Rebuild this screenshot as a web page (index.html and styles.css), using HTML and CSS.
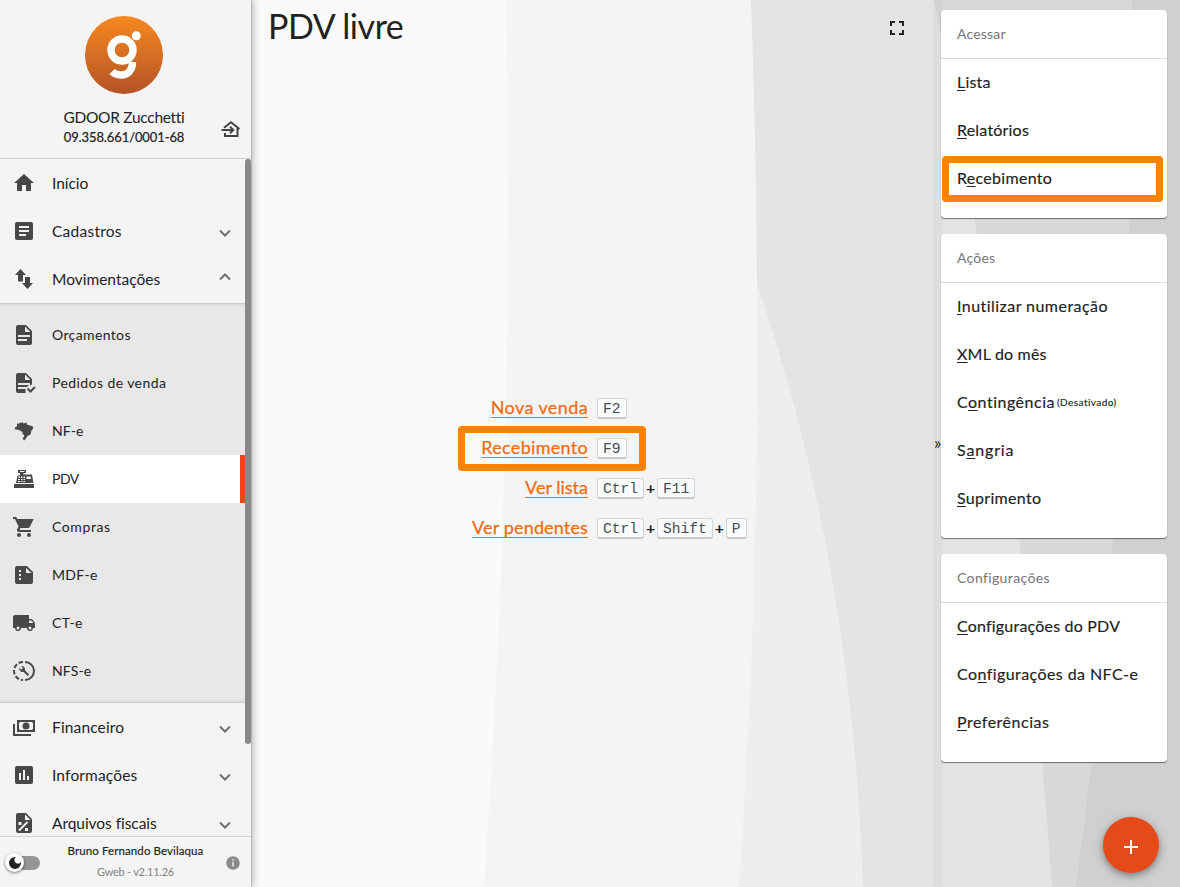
FILE: index.html
```html
<!DOCTYPE html>
<html lang="pt-BR">
<head>
<meta charset="utf-8">
<title>PDV livre</title>
<link rel="stylesheet" href="styles.css">
</head>
<body>
<svg class="backdrop" viewBox="0 0 1180 887" aria-hidden="true">
  <rect width="1180" height="887" fill="#fafafa"/>
  <path fill="#f4f4f4" d="M506 0Q510 210 506 396Q502 620 484 887H1180V0z"/>
  <path fill="#eee" d="M751 0Q756 130 757 284Q760 580 739 887H1180V0z"/>
  <path fill="#e4e4e4" d="M751 0Q756 130 757 284Q852 560 863 887H1180V0z"/>
  <path fill="#d8d8d8" d="M934 0Q1018 410 1052 887H1180V0z"/>
  <path fill="#d0d0d0" d="M1132 0Q1136 440 1076 887H1180V0z"/>
</svg>
<div class="app">
  <aside class="sidebar">
    <header class="company">
      <svg class="logo" viewBox="85 16 78 78"><defs><linearGradient id="lg" x2="0" y2="1"><stop stop-color="#f78820"/><stop offset="1" stop-color="#b45327"/></linearGradient></defs><circle cx="124" cy="55" r="39" fill="url(#lg)"/><g fill="none" stroke="#fff" stroke-width="7.4"><circle cx="122" cy="50" r="11"/><path d="M132.500 62C132.500 70 128 75 121 75C117.400 75 114.400 74 112 71.500"/></g><circle cx="136.300" cy="35.700" r="4.500" fill="#fff"/></svg>
      <div class="company-name">GDOOR Zucchetti</div>
      <div class="company-id">09.358.661/0001-68</div>
      <svg class="switch-company" viewBox="0 0 24 24" fill="none" stroke="#444" stroke-width="2"><path d="M5 10.800L12 5.300l8.500 6.700M18.500 11v8H6v-3M2.500 13H14M11 9.800l3.300 3.200-3.300 3.200"/></svg>
    </header>
    <nav class="nav">
      <a class="item"><svg viewBox="0 0 24 24"><path d="M10 20v-6h4v6h5v-8h3L12 3 2 12h3v8z"/></svg><span class="t-ini">Início</span></a>
      <a class="item"><svg viewBox="0 0 24 24"><path d="M19 3H5a2 2 0 0 0-2 2v14a2 2 0 0 0 2 2h14a2 2 0 0 0 2-2V5a2 2 0 0 0-2-2zm-5 14H7v-2h7zm3-4H7v-2h10zm0-4H7V7h10z"/></svg><span class="t-cad">Cadastros</span><svg class="chev" viewBox="0 0 24 24"><path d="M7 9.500l5 5 5-5"/></svg></a>
      <a class="item"><svg viewBox="0 0 24 24"><path d="M8.500 2L3 8h3v6.500h5V8h3zM13 10v6h-3l5.500 6 5.500-6h-3v-6z"/></svg><span class="t-mov">Movimentações</span><svg class="chev up" viewBox="0 0 24 24"><path d="M7 14.500l5-5 5 5"/></svg></a>
      <div class="submenu">
        <a class="item"><svg viewBox="0 0 24 24"><path d="M14 2H6a2 2 0 0 0-2 2v16a2 2 0 0 0 2 2h12a2 2 0 0 0 2-2V8zm1 16H6v-2h9zm3-4H6v-2h12zm-5-5V3.500L18.500 9z"/></svg><span class="t-orc">Orçamentos</span></a>
        <a class="item"><svg viewBox="0 0 24 24"><path d="M14 2H6a2 2 0 0 0-2 2v16a2 2 0 0 0 2 2h7.500v-4H6v-2h9l2-2H6v-2h12v2.500l2-1V8zm-1 7V3.500L18.500 9z"/><path d="M15.500 17.500l3 3 4.500-4.500" fill="none" stroke="#484848" stroke-width="2"/></svg><span class="t-ped">Pedidos de venda</span></a>
        <a class="item"><svg viewBox="0 0 24 24"><path d="M7.500 3.500l1.500.5 1.500-1 .8 1.500 2.200-.5 1-.5.5 2 2 .8 3.500 1 .8 1.200-.8 2-1.300 1.500-.3 2.500-1 1.500-2.200.8-1.200 2-1.200 1.500-1 1.200-1.800-2 1.700-2-.2-1.700-1.500-.8-.2-2-1.800-1.200-3-1.200-1.500.2-1.200-1L3 8.500 5 7.200V4.500l2 .2z"/></svg><span>NF-e</span></a>
        <a class="item active"><svg viewBox="0 0 24 24"><path fill-rule="evenodd" d="M2 17h20v4H2zM4 16l1.500-7.500H8V6H6V3h8v3h-2.500v1.500H20L21.500 16zM8 4v1h4.500V4zM6.500 9.500V11h1.500V9.500zm2.500 0V11h1.500V9.500zm2.500 0V11H13V9.500zM6 12v1h2v-1zm3 0v1h1.500v-1zm2.500 0v1H13v-1zM6 14v1h2v-1zm3 0v1h1.500v-1zm2.500 0v1H13v-1zM14.500 9.500V12H19l-.5-2.500z"/></svg><span class="t-pdv">PDV</span></a>
        <a class="item"><svg viewBox="0 0 24 24"><path d="M7 18a2 2 0 1 0 0 4 2 2 0 0 0 0-4zM1 2v2h2l3.600 7.600-1.350 2.450C4.500 15.400 5.500 17 7 17h12v-2H7.400l1.150-2h7.450c.75 0 1.400-.4 1.750-1L21.700 4H5.200l-.9-2zm16 16a2 2 0 1 0 0 4 2 2 0 0 0 0-4z"/></svg><span class="t-com">Compras</span></a>
        <a class="item"><svg viewBox="0 0 24 24"><path fill-rule="evenodd" d="M15 3H5a2 2 0 0 0-2 2v14a2 2 0 0 0 2 2h14a2 2 0 0 0 2-2V9zM7 7h2v2H7zm0 4h2v2H7zm0 4h2v2H7zm7-10l5.500 5H14z"/></svg><span class="t-mdf">MDF-e</span></a>
        <a class="item"><svg viewBox="0 0 24 24"><path fill-rule="evenodd" d="M20 8h-3V4H3a2 2 0 0 0-2 2v11h2a3 3 0 0 0 6 0h6a3 3 0 0 0 6 0h2v-5zM6 15.500a1.500 1.500 0 1 1 0 3 1.500 1.500 0 0 1 0-3zm13.500-6l2 2.500H17V9.500zM18 15.500a1.500 1.500 0 1 1 0 3 1.500 1.500 0 0 1 0-3z"/></svg><span class="t-cte">CT-e</span></a>
        <a class="item"><svg viewBox="0 0 24 24"><path d="M13 3a9 9 0 0 1 0 18" fill="none" stroke="#484848" stroke-width="2"/><path d="M11 3a9 9 0 0 0 0 18" fill="none" stroke="#484848" stroke-width="2" stroke-dasharray="4.500 2"/><path d="M17.200 15.600l-4.300-4.300a3.300 3.300 0 0 0-4-4.200l2 2-1.700 1.700-2-2a3.300 3.300 0 0 0 4.200 4l4.300 4.300z"/></svg><span>NFS-e</span></a>
      </div>
      <a class="item"><svg viewBox="0 0 24 24"><path fill-rule="evenodd" d="M5 5h18v12H5zm3 2a2 2 0 0 1-1 1v6l1 1h12l1-1V8l-1-1zm6 .5a3.500 3.500 0 1 0 0 7 3.500 3.500 0 0 0 0-7zM1 9h2v10h16v2H1z"/></svg><span>Financeiro</span><svg class="chev" viewBox="0 0 24 24"><path d="M7 9.500l5 5 5-5"/></svg></a>
      <a class="item"><svg viewBox="0 0 24 24"><path d="M19 3H5a2 2 0 0 0-2 2v14a2 2 0 0 0 2 2h14a2 2 0 0 0 2-2V5a2 2 0 0 0-2-2zM9 17H7v-7h2zm4 0h-2V7h2zm4 0h-2v-4h2z"/></svg><span>Informações</span><svg class="chev" viewBox="0 0 24 24"><path d="M7 9.500l5 5 5-5"/></svg></a>
      <a class="item"><svg viewBox="0 0 24 24"><path d="M14 2H6a2 2 0 0 0-2 2v16a2 2 0 0 0 2 2h12a2 2 0 0 0 2-2V8zm-1 7V3.500L18.500 9z"/><g stroke="#f4f4f4" stroke-width="1.800"><path d="M7 19.500l8.500-8.500"/><path fill="#f4f4f4" stroke="none" d="M6.500 11h3v3h-3zM13 17h3v3h-3z"/></g></svg><span class="t-arq">Arquivos fiscais</span><svg class="chev" viewBox="0 0 24 24"><path d="M7 9.500l5 5 5-5"/></svg></a>
      <i class="scroll-thumb"></i>
    </nav>
    <footer class="user">
      <span class="toggle"><span class="knob"><svg viewBox="0 0 24 24"><path fill="#222" d="M12 3a9 9 0 1 0 9 9c0-.5 0-.9-.1-1.400A5.400 5.400 0 1 1 13.400 3.100 9 9 0 0 0 12 3z"/></svg></span></span>
      <div class="user-text"><div class="user-name">Bruno Fernando Bevilaqua</div><div class="version">Gweb - v2.11.26</div></div>
      <svg class="info" viewBox="0 0 14 14"><circle cx="7" cy="7" r="6.800" fill="#8a8a8a"/><path d="M7 6v4.500M7 3.300v1.500" stroke="#fff" stroke-width="1.300"/></svg>
    </footer>
  </aside>

  <main class="main">
    <header class="top"><h1>PDV livre</h1><svg viewBox="0 0 24 24"><path fill="#222" d="M7 14H5v5h5v-2H7zM5 10h2V7h3V5H5zm12 7h-3v2h5v-5h-2zM14 5v2h3v3h2V5z"/></svg></header>
    <div class="shortcuts">
      <a class="l-nova">Nova venda</a><div class="keys"><kbd>F2</kbd></div>
      <a class="l-rec">Recebimento</a><div class="keys"><kbd>F9</kbd></div>
      <a>Ver lista</a><div class="keys"><kbd>Ctrl</kbd><b>+</b><kbd>F11</kbd></div>
      <a class="l-pend">Ver pendentes</a><div class="keys"><kbd>Ctrl</kbd><b>+</b><kbd>Shift</kbd><b>+</b><kbd>P</kbd></div>
      <i class="mark mark-center"></i>
    </div>
  </main>

  <div class="handle">»</div>
  <section class="panel">
    <div class="card">
      <h2>Acessar</h2>
      <a><span><u>L</u>ista</span></a>
      <a><span><u>R</u>elatórios</span></a>
      <a><span class="p-rec">R<u>e</u>cebimento</span></a>
      <i class="mark mark-card"></i>
    </div>
    <div class="card">
      <h2>Ações</h2>
      <a><span class="p-inu"><u>I</u>nutilizar numeração</span></a>
      <a><span><u>X</u>ML do mês</span></a>
      <a><span class="p-con">C<u>o</u>ntingência</span><small>(Desativado)</small></a>
      <a><span class="p-san">S<u>a</u>ngria</span></a>
      <a><span class="p-rec"><u>S</u>uprimento</span></a>
    </div>
    <div class="card">
      <h2 class="h-conf">Configurações</h2>
      <a><span><u>C</u>onfigurações do PDV</span></a>
      <a><span class="p-nfc">Co<u>n</u>figurações da NFC-e</span></a>
      <a><span class="p-con"><u>P</u>referências</span></a>
    </div>
  </section>
</div>
<button class="fab"><svg viewBox="0 0 24 24"><path d="M12 5v14M5 12h14" stroke="#fff" stroke-width="2"/></svg></button>
</body>
</html>
```
FILE: styles.css
```css
* { box-sizing: border-box; }
body { margin: 0; width: 1180px; height: 887px; overflow: hidden; font-family: Lato, sans-serif; color: #222; }
.backdrop { position: absolute; inset: 0; width: 1180px; height: 887px; }
.app { position: relative; display: flex; height: 887px; }

.sidebar { width: 251px; flex: none; display: flex; flex-direction: column; background: #f4f4f4; box-shadow: 0 0 1px 1px rgba(0,0,0,.12), 1px 0 8px 1px rgba(0,0,0,.25); }
.company { position: relative; flex: none; height: 159px; padding: 16px 3px 0 0; border-bottom: 1px solid #d2d2d2; text-align: center; }
.logo { display: block; width: 78px; height: 78px; margin: 0 auto; }
.company-name { margin-top: 13px; font-size: 15.5px; line-height: 20px; letter-spacing: -.3px; }
.company-id { padding-top: 1px; font-size: 13px; line-height: 19px; letter-spacing: -.1px; -webkit-text-stroke: .2px; }
.switch-company { position: absolute; left: 219px; top: 117px; width: 24px; height: 24px; }

.nav { position: relative; flex: 1; min-height: 0; overflow: hidden; }
.item { display: flex; align-items: center; height: 48px; width: 245px; padding-left: 12px; font-size: 15.5px; }
.item > svg { width: 24px; height: 24px; fill: #484848; flex: none; }
.item > span { margin-left: 16px; padding-bottom: 1px; flex: 1; white-space: nowrap; letter-spacing: .15px; }
.item > .chev { margin-right: 8px; margin-top: 3px; fill: none; stroke: #707070; stroke-width: 2; }
.item > .chev.up { margin-top: -5px; }
.submenu { height: 400px; width: 245px; padding-top: 7px; border-top: 1px solid #ccc; border-bottom: 1px solid #ccc; background: linear-gradient(#d8d8d8, #e8e8e8 3px, #e8e8e8 calc(100% - 3px), #dadada); }
.submenu .item { font-size: 14px; }
.item.active { background: #fff; border-right: 5px solid #e64a19; }
.item > .t-ini { letter-spacing: -.05px; }
.item > .t-cad { letter-spacing: .25px; }
.item > .t-mov { letter-spacing: 0; }
.item > .t-orc { letter-spacing: .37px; }
.item > .t-ped { letter-spacing: .42px; }
.item > .t-pdv { letter-spacing: -.5px; }
.item > .t-com { letter-spacing: .6px; }
.item > .t-mdf { letter-spacing: .35px; }
.item > .t-cte { letter-spacing: .35px; }
.item > .t-arq { letter-spacing: -.05px; }
.scroll-thumb { position: absolute; right: 0; top: 0; width: 6px; height: 585px; border-radius: 3px; background: #888; }

.user { flex: none; display: flex; align-items: center; height: 51px; padding: 0 11px 0 6px; border-top: 1px solid #d2d2d2; }
.toggle { position: relative; width: 34px; height: 14px; margin-top: 2px; border-radius: 7px; background: linear-gradient(90deg, transparent 6px, #959595 6px); }
.knob { position: absolute; left: -1px; top: -3px; width: 19px; height: 19px; display: grid; place-items: center; border-radius: 50%; background: #fff; box-shadow: 0 1px 3px rgba(0,0,0,.5); }
.knob svg { width: 16px; height: 16px; }
.user-text { flex: 1; padding: 0 0 2px 5px; text-align: center; }
.user-name { font-size: 11.5px; line-height: 21px; letter-spacing: .1px; -webkit-text-stroke: .15px; }
.version { font-size: 11px; line-height: 21px; color: #858585; letter-spacing: -.25px; }
.info { width: 14px; height: 14px; margin-top: 2px; }

.main { width: 682px; flex: none; }
.top { display: flex; justify-content: space-between; height: 388px; padding: 3px 24px 0 17px; }
.top h1 { margin: 0; font-weight: 400; font-size: 34px; line-height: 46px; letter-spacing: -.45px; }
.top svg { width: 24px; height: 24px; margin-top: 13px; }
.shortcuts { position: relative; display: grid; grid-template-columns: 337px 1fr; column-gap: 9px; grid-auto-rows: 40px; align-items: center; }
.shortcuts a { justify-self: end; margin-bottom: 2px; color: #ee6c14; font-size: 18px; line-height: 24px; white-space: nowrap; text-decoration: underline; text-decoration-thickness: 1px; text-underline-offset: 3px; -webkit-text-stroke: .25px; }
.shortcuts .l-nova { letter-spacing: .4px; }
.shortcuts .l-rec { letter-spacing: .3px; }
.shortcuts .l-pend { letter-spacing: .15px; }
.keys { display: flex; align-items: center; padding-top: 1px; }
kbd { height: 21px; padding: 0 5px; border: 1px solid #d0d5da; border-bottom: 2px solid #c4c9ce; border-radius: 3px; background: #fafbfc; color: #444d56; font: 14.6px/21px "Liberation Mono", monospace; }
.keys b { width: 13px; padding-bottom: 2px; text-align: center; font-size: 16px; line-height: 20px; }
.mark { position: absolute; border: 7px solid #ff8200; border-radius: 4px; }
.mark-center { left: 207px; top: 38px; width: 188px; height: 45px; }
.mark-card { left: 1px; top: 146px; width: 221px; height: 46px; }

.handle { width: 8px; flex: none; display: flex; align-items: center; padding: 0 0 3px 1px; background: rgba(0,0,0,.025); box-shadow: 2px 0 rgba(0,0,0,.025); font-size: 17px; }
.panel { position: relative; width: 226px; padding-top: 10px; display: flex; flex-direction: column; gap: 16px; }
.card { position: relative; padding-bottom: 15px; background: #fff; border-radius: 4px; box-shadow: 0 1px 1px rgba(0,0,0,.5); }
.card h2 { margin: 0; height: 49px; padding-left: 16px; border-bottom: 1px solid #ddd; font-weight: 400; font-size: 14px; line-height: 48px; color: #757575; letter-spacing: .2px; }
.card .h-conf { letter-spacing: .37px; }
.card a { display: flex; height: 48px; padding: 0 0 4px 16px; align-items: center; font-size: 16px; white-space: nowrap; letter-spacing: .2px; -webkit-text-stroke: .15px; }
.card u { text-decoration-thickness: 1px; text-underline-offset: 2px; }
.card small { margin-left: 2px; padding-top: 2px; font-size: 10px; letter-spacing: .45px; }
.p-rec { letter-spacing: .3px; }
.p-inu { letter-spacing: .45px; }
.p-con { letter-spacing: .5px; }
.p-san { letter-spacing: .85px; }
.p-nfc { letter-spacing: .42px; }

.fab { position: absolute; left: 1103px; top: 817px; width: 56px; height: 56px; padding: 4px 0 0; display: grid; place-items: center; border: 0; border-radius: 50%; background: #e64a19; box-shadow: 0 3px 6px rgba(0,0,0,.3), 0 2px 14px rgba(0,0,0,.15); }
.fab svg { width: 24px; height: 24px; }
```
